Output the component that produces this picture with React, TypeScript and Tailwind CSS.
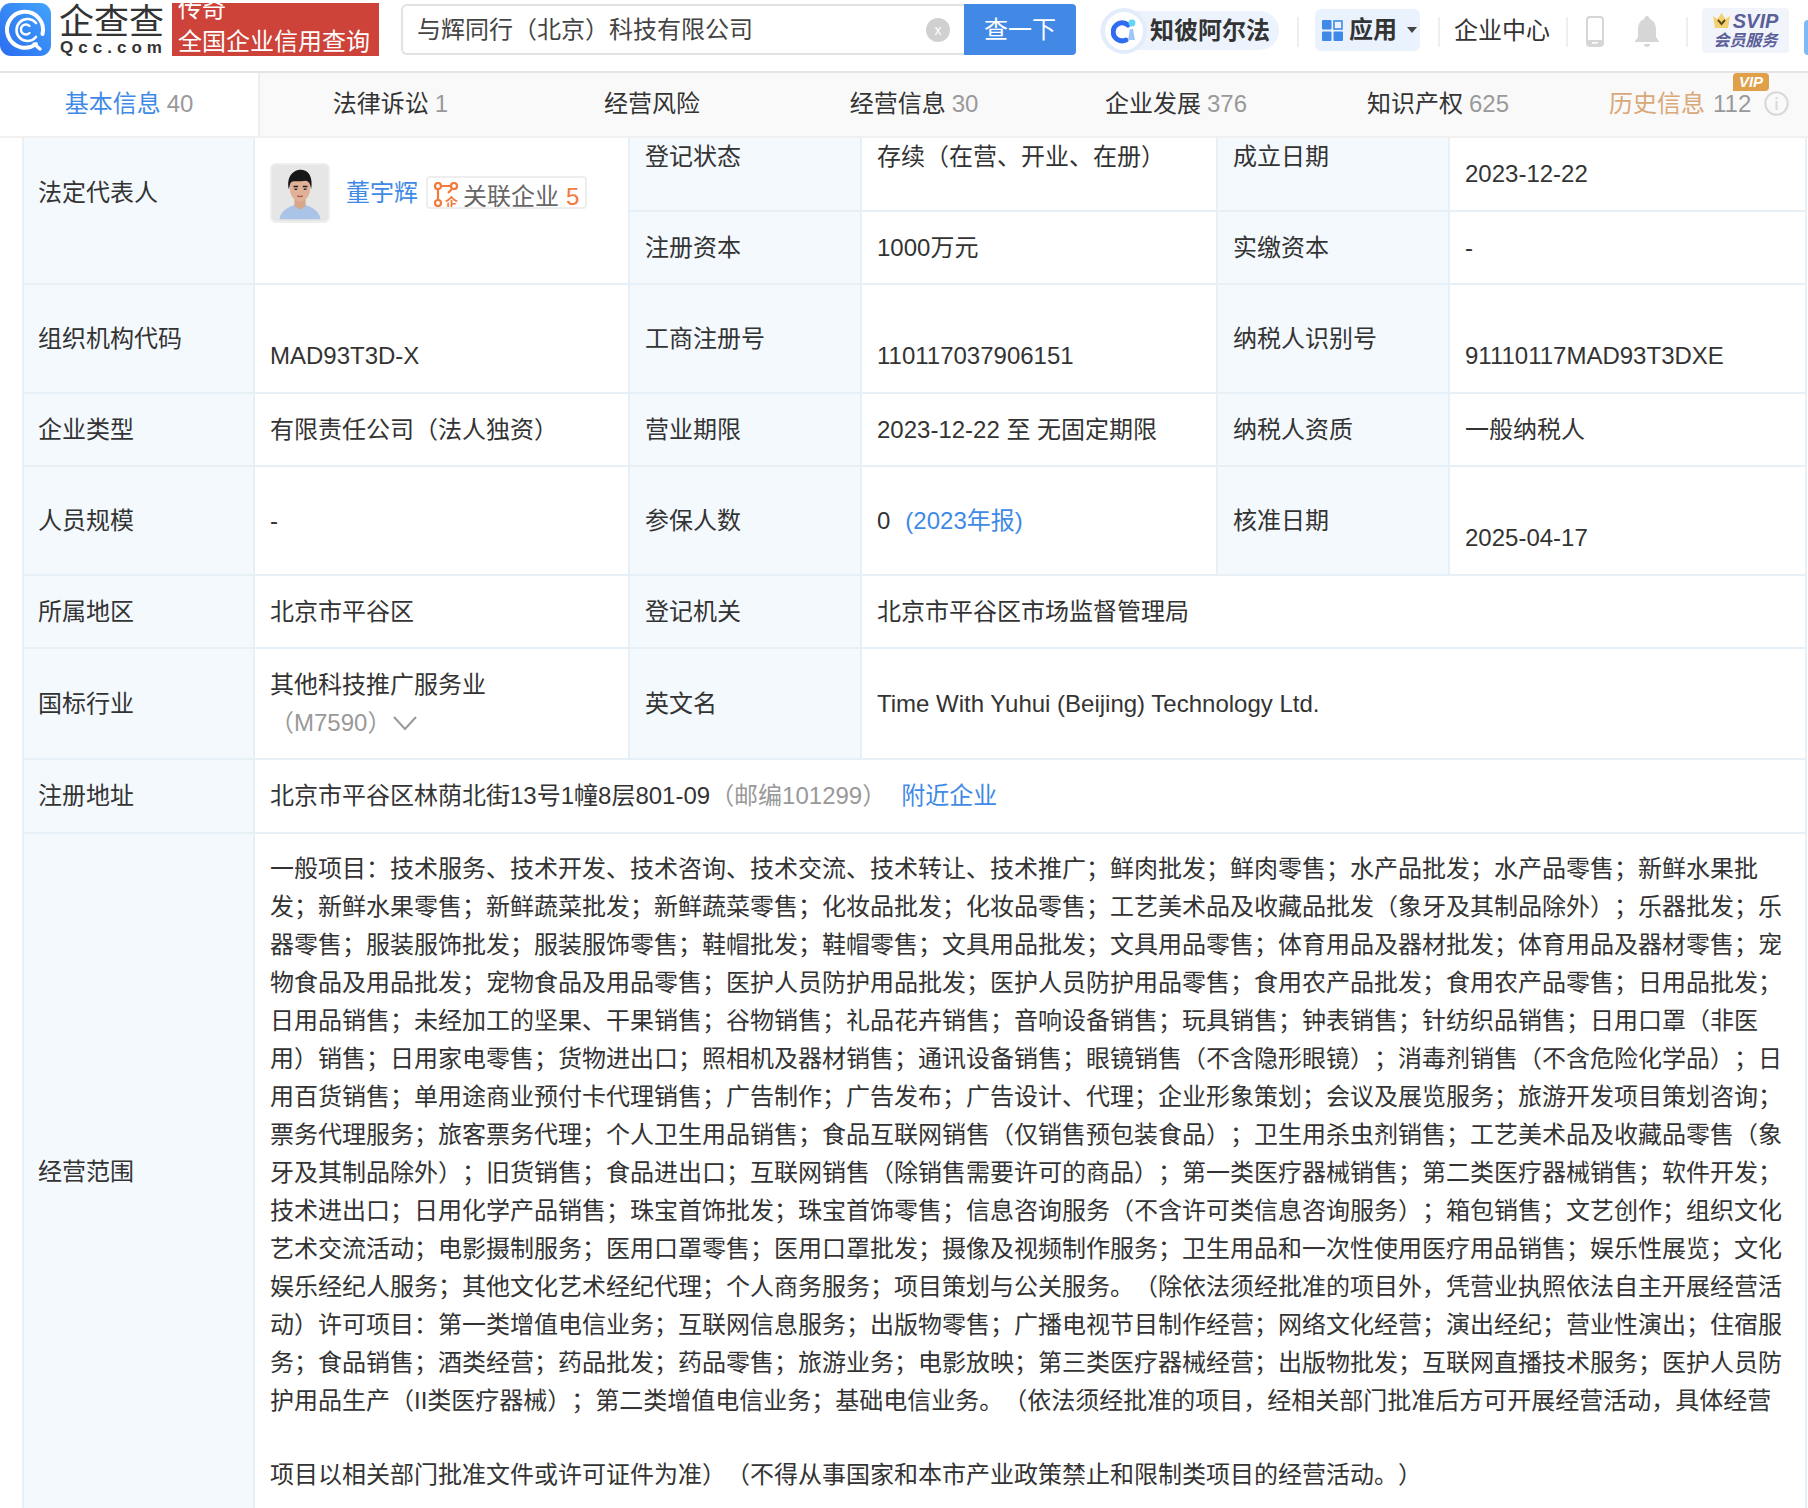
import React from "react";

const lines = [
  "一般项目：技术服务、技术开发、技术咨询、技术交流、技术转让、技术推广；鲜肉批发；鲜肉零售；水产品批发；水产品零售；新鲜水果批",
  "发；新鲜水果零售；新鲜蔬菜批发；新鲜蔬菜零售；化妆品批发；化妆品零售；工艺美术品及收藏品批发（象牙及其制品除外）；乐器批发；乐",
  "器零售；服装服饰批发；服装服饰零售；鞋帽批发；鞋帽零售；文具用品批发；文具用品零售；体育用品及器材批发；体育用品及器材零售；宠",
  "物食品及用品批发；宠物食品及用品零售；医护人员防护用品批发；医护人员防护用品零售；食用农产品批发；食用农产品零售；日用品批发；",
  "日用品销售；未经加工的坚果、干果销售；谷物销售；礼品花卉销售；音响设备销售；玩具销售；钟表销售；针纺织品销售；日用口罩（非医",
  "用）销售；日用家电零售；货物进出口；照相机及器材销售；通讯设备销售；眼镜销售（不含隐形眼镜）；消毒剂销售（不含危险化学品）；日",
  "用百货销售；单用途商业预付卡代理销售；广告制作；广告发布；广告设计、代理；企业形象策划；会议及展览服务；旅游开发项目策划咨询；",
  "票务代理服务；旅客票务代理；个人卫生用品销售；食品互联网销售（仅销售预包装食品）；卫生用杀虫剂销售；工艺美术品及收藏品零售（象",
  "牙及其制品除外）；旧货销售；食品进出口；互联网销售（除销售需要许可的商品）；第一类医疗器械销售；第二类医疗器械销售；软件开发；",
  "技术进出口；日用化学产品销售；珠宝首饰批发；珠宝首饰零售；信息咨询服务（不含许可类信息咨询服务）；箱包销售；文艺创作；组织文化",
  "艺术交流活动；电影摄制服务；医用口罩零售；医用口罩批发；摄像及视频制作服务；卫生用品和一次性使用医疗用品销售；娱乐性展览；文化",
  "娱乐经纪人服务；其他文化艺术经纪代理；个人商务服务；项目策划与公关服务。（除依法须经批准的项目外，凭营业执照依法自主开展经营活",
  "动）许可项目：第一类增值电信业务；互联网信息服务；出版物零售；广播电视节目制作经营；网络文化经营；演出经纪；营业性演出；住宿服",
  "务；食品销售；酒类经营；药品批发；药品零售；旅游业务；电影放映；第三类医疗器械经营；出版物批发；互联网直播技术服务；医护人员防",
  "护用品生产（II类医疗器械）；第二类增值电信业务；基础电信业务。（依法须经批准的项目，经相关部门批准后方可开展经营活动，具体经营",
];
const lastLine = "项目以相关部门批准文件或许可证件为准）（不得从事国家和本市产业政策禁止和限制类项目的经营活动。）";

const Label = ({ children, rowSpan, lead }: { children: React.ReactNode; rowSpan?: number; lead?: boolean }) => (
  <td rowSpan={rowSpan} className={`border-2 border-[#e7f0f7] bg-[#f4f9fd] pr-2 align-middle ${lead ? "pl-[14px]" : "pl-[15px]"}`}>
    {children}
  </td>
);

const Value = ({ children, colSpan, low }: { children: React.ReactNode; colSpan?: number; low?: boolean }) => (
  <td colSpan={colSpan} className={`border-2 border-[#e7f0f7] bg-white pl-[15px] pr-2 align-middle ${low ? "pt-[34px]" : ""}`}>
    {children}
  </td>
);

const Tab = ({ name, count, active, width }: { name: string; count?: string; active?: boolean; width: string }) => (
  <div
    className={`flex items-center justify-center pb-[2px] ${width} ${
      active ? "bg-white border-r-2 border-[#eeeeee]" : ""
    }`}
  >
    <span className={active ? "text-[#3f8ae6]" : "text-[#333333]"}>{name}</span>
    {count && <span className="ml-[6px] text-[#999999]">{count}</span>}
  </div>
);

const Divider = ({ className }: { className: string }) => <div className={`h-[30px] w-[2px] bg-[#eeeeee] ${className}`} />;

const Logo = () => (
  <svg width="51" height="53" viewBox="0 0 51 53" className="shrink-0">
    <defs>
      <linearGradient id="lg" x1="0" y1="1" x2="1" y2="0">
        <stop offset="0" stopColor="#2a6df0" />
        <stop offset="1" stopColor="#43a4fb" />
      </linearGradient>
    </defs>
    <rect width="51" height="53" rx="11" fill="url(#lg)" />
    <path d="M36 41 A18 18 0 1 1 42.5 31" fill="none" stroke="#fff" strokeWidth="4" strokeLinecap="round" />
    <path d="M36 34 A11 11 0 1 1 36 20" fill="none" stroke="#fff" strokeWidth="2.6" strokeLinecap="round" />
    <path d="M29.5 30 A5 5 0 1 1 29.5 23" fill="none" stroke="#fff" strokeWidth="2.4" strokeLinecap="round" />
    <path d="M34 41 L40 46" stroke="#fff" strokeWidth="3.4" strokeLinecap="round" />
  </svg>
);

const Avatar = () => (
  <svg width="60" height="60" viewBox="0 0 60 60" className="shrink-0 rounded-[6px] border-2 border-[#eeeeee] bg-[#e6e6e6]">
    <path d="M8 58 C10 47 20 44 30 41 C40 44 50 47 52 58 Z" fill="#a9c4e6" />
    <path d="M24 36 H36 V44 L30 48 L24 44 Z" fill="#d8a68a" />
    <ellipse cx="30" cy="25" rx="11" ry="14" fill="#e0b196" />
    <path d="M18 26 C15 11 24 5 31 5 C40 5 44 14 42 26 C41 20 39 17 36 17 C30 18 24 17 21 18 C19 20 19 23 18 26 Z" fill="#17171a" />
    <path d="M23 23 h5 M33 23 h5" stroke="#222" strokeWidth="1.6" />
    <path d="M24 26 h3 M34 26 h3" stroke="#333" strokeWidth="1.4" />
    <path d="M27 33 q3 1.6 6 0" stroke="#a5564c" strokeWidth="1.4" fill="none" />
  </svg>
);

const RelIcon = () => (
  <svg width="24" height="25" viewBox="0 0 24 25" className="shrink-0">
    <g fill="none" stroke="#f27a3c" strokeWidth="2.2">
      <circle cx="4" cy="4" r="3" />
      <circle cx="20" cy="4" r="3" />
      <circle cx="4" cy="21" r="3" />
      <path d="M7 4 H17 M4 7 V18 M18 7 L14 11" />
    </g>
    <text x="11" y="25" fontSize="13" fontWeight="700" fill="#f27a3c">企</text>
  </svg>
);

export default function App() {
  return (
    <div
      className="h-[1508px] w-[1808px] overflow-hidden bg-white text-[24px] text-[#333333] [text-spacing-trim:space-all]"
      style={{ fontFamily: '"Liberation Sans", "Noto Sans CJK SC", sans-serif' }}
    >
      {/* Header */}
      <header className="flex h-[73px] items-start border-b-2 border-[#e4e4e4] pt-[3px]">
        <Logo />
        <div className="ml-[8px] flex h-[54px] w-[107px] shrink-0 flex-col items-center overflow-hidden">
          <div className="-ml-[2px] h-[36px] text-[35px] leading-[38px] text-[#333333] whitespace-nowrap">企查查</div>
          <div className="mt-[1px] pl-[2px] text-[17px] font-bold leading-[16px] tracking-[5px] text-[#333333] whitespace-nowrap">Qcc.com</div>
        </div>
        <div className="ml-[6px] h-[53px] w-[207px] shrink-0 overflow-hidden bg-[#cd4239] pl-[6px] text-[24px] text-white">
          <div className="-mt-[10px] leading-[32px]">传奇</div>
          <div className="mt-[1px] leading-[32px] whitespace-nowrap">全国企业信用查询</div>
        </div>
        <div className="ml-[22px] mt-[1px] flex h-[51px] w-[675px] shrink-0">
          <div className="flex flex-1 items-center rounded-l-[6px] border-2 border-r-0 border-[#e2e2e2] pl-[14px] text-[#444444]">
            <span className="flex-1 whitespace-nowrap">与辉同行（北京）科技有限公司</span>
            <span className="mr-[14px] flex h-[24px] w-[24px] items-center justify-center rounded-full bg-[#d0d0d0] text-[14px] leading-none text-white">x</span>
          </div>
          <div className="flex w-[112px] items-center justify-center rounded-r-[4px] bg-[#4289e6] text-white">查一下</div>
        </div>
        <div className="ml-[24px] mt-[8px] flex h-[39px] w-[179px] shrink-0 items-center rounded-full bg-[#edf3fd]">
          <div className="ml-[1px] flex h-[46px] w-[46px] shrink-0 items-center justify-center rounded-full border-[4px] border-[#e3ecfb] bg-white">
            <svg width="26" height="26" viewBox="0 0 26 26">
              <path d="M17 7 A9 9 0 1 0 15 22" fill="none" stroke="#2f6cf0" strokeWidth="5" strokeLinecap="round" />
              <circle cx="21" cy="5" r="3.4" fill="#5fd6fa" />
              <path d="M19 11 L22 11 L24 22 L17 22 Z" fill="#9fc6f8" />
            </svg>
          </div>
          <span className="ml-[3px] font-bold text-[#333333] whitespace-nowrap">知彼阿尔法</span>
        </div>
        <Divider className="ml-[18px] mt-[14px]" />
        <div className="ml-[16px] mt-[6px] flex h-[42px] w-[105px] shrink-0 items-center rounded-[6px] bg-[#eaf2fe] pl-[7px]">
          <svg width="21" height="21" viewBox="0 0 21 21">
            <rect width="9.5" height="9.5" rx="1" fill="#3f8ae6" />
            <rect x="12" y="1" width="8" height="8" fill="none" stroke="#3f8ae6" strokeWidth="1.6" />
            <rect y="11.5" width="9.5" height="9.5" rx="1" fill="#3f8ae6" />
            <rect x="11.5" y="11.5" width="9.5" height="9.5" rx="1" fill="#3f8ae6" />
          </svg>
          <span className="ml-[6px] font-bold text-[#333333]">应用</span>
          <span className="ml-[10px] h-0 w-0 border-x-[5px] border-t-[6px] border-x-transparent border-t-[#444444]" />
        </div>
        <Divider className="ml-[18px] mt-[14px]" />
        <span className="ml-[14px] mt-[9px] leading-[38px] whitespace-nowrap">企业中心</span>
        <Divider className="ml-[16px] mt-[14px]" />
        <svg width="18" height="31" viewBox="0 0 18 31" className="ml-[18px] mt-[13px] shrink-0">
          <rect x="1" y="1" width="16" height="29" rx="3" fill="none" stroke="#d6d6d6" strokeWidth="2" />
          <rect x="1" y="24" width="16" height="6" fill="#d6d6d6" />
          <rect x="6" y="26" width="6" height="1.6" fill="#fff" />
        </svg>
        <svg width="26" height="31" viewBox="0 0 26 31" className="ml-[30px] mt-[13px] shrink-0">
          <path d="M13 0 a2.6 2.6 0 0 1 2.6 3 C20.5 4.5 22 9 22 14 V21 L25.5 26 H0.5 L4 21 V14 C4 9 5.5 4.5 10.4 3 A2.6 2.6 0 0 1 13 0Z" fill="#d6d6d6" />
          <path d="M10 28 h6 a3 3 0 0 1 -6 0Z" fill="#d6d6d6" />
        </svg>
        <Divider className="ml-[26px] mt-[14px]" />
        <div className="ml-[14px] mt-[5px] flex h-[45px] w-[87px] shrink-0 flex-col items-center justify-center rounded-[4px] bg-[#f2f4fc] text-[#5a6098]">
          <div className="flex h-[21px] items-center">
            <svg width="17" height="15" viewBox="0 0 17 15">
              <path d="M0 3 L4.5 6 L8.5 0 L12.5 6 L17 3 L15 15 H2 Z" fill="#f4d06f" />
              <path d="M5 7 L8.5 11 L12 7" fill="none" stroke="#5b4a1e" strokeWidth="2" />
            </svg>
            <span className="ml-[3px] text-[20px] font-bold italic leading-[20px]">SVIP</span>
          </div>
          <span className="text-[16px] font-bold italic leading-[20px] whitespace-nowrap">会员服务</span>
        </div>
        <div className="ml-[15px] mt-[17px] h-[35px] w-[4px] shrink-0 rounded-l-[4px] bg-[#7db9f7]" />
      </header>

      {/* Tabs */}
      <nav className="flex h-[65px] bg-[#f9f9f9] border-b-2 border-[#f0f0f0]">
        <Tab name="基本信息" count="40" active width="w-[260px]" />
        <Tab name="法律诉讼" count="1" width="w-[261px]" />
        <Tab name="经营风险" width="w-[262px]" />
        <Tab name="经营信息" count="30" width="w-[262px]" />
        <Tab name="企业发展" count="376" width="w-[262px]" />
        <Tab name="知识产权" count="625" width="w-[262px]" />
        <div className="flex w-[239px] items-center pb-[2px] pl-[40px]">
          <span className="text-[#d9a878]">历史信息</span>
          <span className="relative ml-[8px] text-[#999999]">
            112
            <span className="absolute -top-[13px] left-[20px] flex h-[18px] w-[36px] items-center justify-center rounded-t-[4px] rounded-br-[4px] bg-[#e0a04a] text-[15px] font-bold italic leading-none text-white">
              VIP
            </span>
          </span>
          <svg width="25" height="25" viewBox="0 0 25 25" className="ml-[13px]">
            <circle cx="12.5" cy="12.5" r="11.2" fill="none" stroke="#d8d8d8" strokeWidth="2" />
            <rect x="11.5" y="10" width="2" height="9" fill="#d8d8d8" />
            <rect x="11.5" y="6" width="2" height="2" fill="#d8d8d8" />
          </svg>
        </div>
      </nav>

      {/* Table: the top of its first row scrolls under the tabs */}
      <div className="h-[1370px] overflow-hidden">
        <table className="-mt-[37px] ml-[22px] w-[1785px] table-fixed border-collapse">
          <colgroup>
            <col className="w-[231px]" />
            <col className="w-[375px]" />
            <col className="w-[232px]" />
            <col className="w-[356px]" />
            <col className="w-[232px]" />
            <col />
          </colgroup>
          <tbody>
            <tr className="h-[109px]">
              <Label lead rowSpan={2}>法定代表人</Label>
              <td rowSpan={2} className="border-2 border-[#e7f0f7] bg-white pl-[15px] align-top">
                <div className="mt-[60px] flex items-start">
                  <Avatar />
                  <span className="ml-[16px] mt-[12px] text-[#3f8ae6] whitespace-nowrap">董宇辉</span>
                  <div className="ml-[8px] mt-[13px] flex h-[33px] items-start overflow-hidden rounded-[4px] border-2 border-[#eeeeee] pl-[6px] pr-[6px] whitespace-nowrap text-[#666666]">
                    <div className="mt-[4px]">
                      <RelIcon />
                    </div>
                    <span className="ml-[5px] leading-[37px]">关联企业</span>
                    <span className="ml-[7px] leading-[37px] text-[#f27a3c]">5</span>
                  </div>
                </div>
              </td>
              <Label>登记状态</Label>
              <Value>存续（在营、开业、在册）</Value>
              <Label>成立日期</Label>
              <Value low>2023-12-22</Value>
            </tr>
            <tr className="h-[73px]">
              <Label>注册资本</Label>
              <Value>1000万元</Value>
              <Label>实缴资本</Label>
              <Value>-</Value>
            </tr>
            <tr className="h-[109px]">
              <Label lead>组织机构代码</Label>
              <Value low>MAD93T3D-X</Value>
              <Label>工商注册号</Label>
              <Value low>110117037906151</Value>
              <Label>纳税人识别号</Label>
              <Value low>91110117MAD93T3DXE</Value>
            </tr>
            <tr className="h-[73px]">
              <Label lead>企业类型</Label>
              <Value>有限责任公司（法人独资）</Value>
              <Label>营业期限</Label>
              <Value>2023-12-22 至 无固定期限</Value>
              <Label>纳税人资质</Label>
              <Value>一般纳税人</Value>
            </tr>
            <tr className="h-[109px]">
              <Label lead>人员规模</Label>
              <Value>-</Value>
              <Label>参保人数</Label>
              <Value>
                0<span className="ml-[15px] text-[#3f8ae6]">(2023年报)</span>
              </Value>
              <Label>核准日期</Label>
              <Value low>2025-04-17</Value>
            </tr>
            <tr className="h-[73px]">
              <Label lead>所属地区</Label>
              <Value>北京市平谷区</Value>
              <Label>登记机关</Label>
              <Value colSpan={3}>北京市平谷区市场监督管理局</Value>
            </tr>
            <tr className="h-[111px]">
              <Label lead>国标行业</Label>
              <Value>
                <div className="leading-[38px]">其他科技推广服务业</div>
                <div className="flex items-center leading-[38px] text-[#999999]">
                  <span>（M7590）</span>
                  <svg width="26" height="16" viewBox="0 0 26 16" className="ml-[1px]">
                    <path d="M2 2 L13 14 L24 2" fill="none" stroke="#999999" strokeWidth="2" />
                  </svg>
                </div>
              </Value>
              <Label>英文名</Label>
              <Value colSpan={3}>Time With Yuhui (Beijing) Technology Ltd.</Value>
            </tr>
            <tr className="h-[74px]">
              <Label lead>注册地址</Label>
              <Value colSpan={5}>
                北京市平谷区林荫北街13号1幢8层801-09
                <span className="text-[#999999]">（邮编101299）</span>
                <span className="ml-[15px] text-[#3f8ae6]">附近企业</span>
              </Value>
            </tr>
            <tr>
              <Label lead>经营范围</Label>
              <Value colSpan={5}>
                <div className="pt-[16px] pb-[16px] leading-[38px]">
                  {lines.map((line, i) => (
                    <div key={i} className="whitespace-nowrap">
                      {line}
                    </div>
                  ))}
                  <div className="mt-[36px] whitespace-nowrap">{lastLine}</div>
                </div>
              </Value>
            </tr>
          </tbody>
        </table>
      </div>
    </div>
  );
}
